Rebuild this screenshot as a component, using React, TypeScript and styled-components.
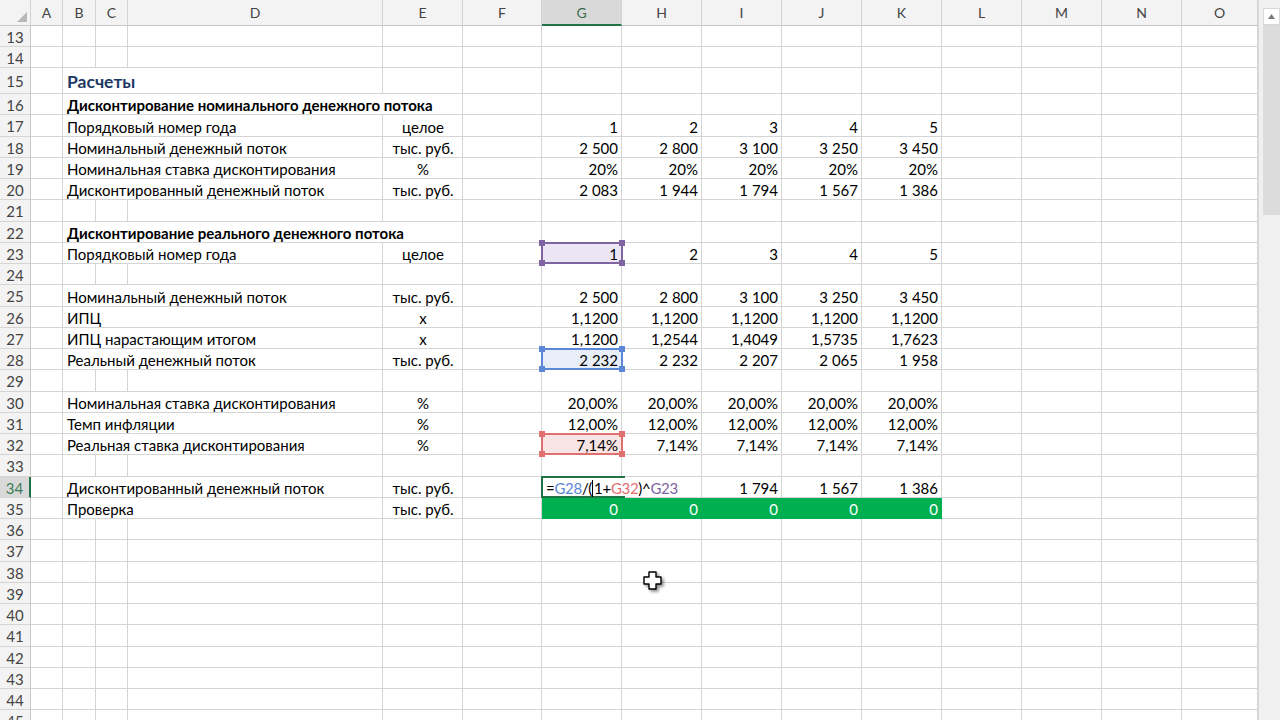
import React from 'react';
import styled, { createGlobalStyle, css } from 'styled-components';

const GRID = '#d4d4d4';
const HEAD_BG = '#f3f3f3';
const EXCEL_GREEN = '#217346';
const CHECK_GREEN = '#00b050';

const COLUMNS = ['A', 'B', 'C', 'D', 'E', 'F', 'G', 'H', 'I', 'J', 'K', 'L', 'M', 'N', 'O'];
const WIDTHS = [32, 33, 32, 255, 80, 79, 80, 80, 80, 80, 80, 80, 80, 80, 76];
const ROW_HEAD_W = 31;
const FIRST_ROW = 13;
const LAST_ROW = 45;

type Tone = 'purple' | 'blue' | 'red';

interface RowSpec {
  label: string;
  kind?: 'title' | 'section' | 'text';
  unit?: string;
  values?: string[];
  mark?: Tone;
  editing?: boolean;
  check?: boolean;
}

const five = (v: string) => [v, v, v, v, v];

const ROWS: Record<number, RowSpec> = {
  15: { label: 'Расчеты', kind: 'title' },
  16: { label: 'Дисконтирование номинального денежного потока', kind: 'section' },
  17: { label: 'Порядковый номер года', unit: 'целое', values: ['1', '2', '3', '4', '5'] },
  18: { label: 'Номинальный денежный поток', unit: 'тыс. руб.', values: ['2 500', '2 800', '3 100', '3 250', '3 450'] },
  19: { label: 'Номинальная ставка дисконтирования', unit: '%', values: five('20%') },
  20: { label: 'Дисконтированный денежный поток', unit: 'тыс. руб.', values: ['2 083', '1 944', '1 794', '1 567', '1 386'] },
  22: { label: 'Дисконтирование реального денежного потока', kind: 'section' },
  23: { label: 'Порядковый номер года', unit: 'целое', values: ['1', '2', '3', '4', '5'], mark: 'purple' },
  25: { label: 'Номинальный денежный поток', unit: 'тыс. руб.', values: ['2 500', '2 800', '3 100', '3 250', '3 450'] },
  26: { label: 'ИПЦ', unit: 'x', values: five('1,1200') },
  27: { label: 'ИПЦ нарастающим итогом', unit: 'x', values: ['1,1200', '1,2544', '1,4049', '1,5735', '1,7623'] },
  28: { label: 'Реальный денежный поток', unit: 'тыс. руб.', values: ['2 232', '2 232', '2 207', '2 065', '1 958'], mark: 'blue' },
  30: { label: 'Номинальная ставка дисконтирования', unit: '%', values: five('20,00%') },
  31: { label: 'Темп инфляции', unit: '%', values: five('12,00%') },
  32: { label: 'Реальная ставка дисконтирования', unit: '%', values: five('7,14%'), mark: 'red' },
  34: { label: 'Дисконтированный денежный поток', unit: 'тыс. руб.', values: ['', '', '1 794', '1 567', '1 386'], editing: true },
  35: { label: 'Проверка', unit: 'тыс. руб.', values: five('0'), check: true },
};

const TONES: Record<Tone, { line: string; fill: string }> = {
  purple: { line: '#8064a2', fill: '#ece6f4' },
  blue: { line: '#5b87d6', fill: '#e7edf9' },
  red: { line: '#e07070', fill: '#f9e4e4' },
};

// rows 16+ are 21.25px on average, rounded so that lines land on whole pixels
const rowHeight = (n: number) => {
  if (n < 15) return 21;
  if (n === 15) return 26;
  const top = Math.round(94 + (n - 16) * 21.25);
  const next = Math.round(94 + (n - 15) * 21.25);
  return next - top;
};

const nbsp = (s: string) => s.replace(/ /g, '\u00a0');

const GlobalStyle = createGlobalStyle`
  html, body {
    margin: 0;
    padding: 0;
    background: #fff;
    overflow: hidden;
  }
  body {
    font-family: Lato, 'Liberation Sans', sans-serif;
    color: #000;
  }
`;

const Page = styled.div`
  display: flex;
  width: 1280px;
  height: 720px;
  overflow: hidden;
`;

const Sheet = styled.div`
  width: 1258px;
  display: flex;
  flex-direction: column;
`;

const HeaderRow = styled.div`
  display: flex;
  flex: none;
  height: 26px;
  background: ${HEAD_BG};
`;

const Corner = styled.div`
  width: ${ROW_HEAD_W}px;
  box-sizing: border-box;
  border-right: 1px solid ${GRID};
  border-bottom: 1px solid #c6c6c6;
  display: flex;
  align-items: flex-end;
  justify-content: flex-end;
  padding: 0 3px 3px 0;
`;

const ColHead = styled.div<{ $w: number; $active?: boolean }>`
  width: ${p => p.$w}px;
  flex: none;
  box-sizing: border-box;
  border-right: 1px solid ${GRID};
  border-bottom: 1px solid #c6c6c6;
  display: flex;
  align-items: center;
  justify-content: center;
  font-size: 14px;
  color: #444;
  ${p =>
    p.$active &&
    css`
      background: #d9d9d9;
      border-bottom: 2px solid ${EXCEL_GREEN};
      color: #3d6b51;
    `}
`;

const Row = styled.div<{ $h: number }>`
  display: flex;
  height: ${p => p.$h}px;
  flex: none;
`;

const RowHead = styled.div<{ $active?: boolean }>`
  width: ${ROW_HEAD_W}px;
  flex: none;
  box-sizing: border-box;
  background: ${HEAD_BG};
  border-right: 1px solid #c6c6c6;
  border-bottom: 1px solid ${GRID};
  display: flex;
  align-items: center;
  justify-content: center;
  padding-top: 1px;
  font-size: 15px;
  color: #444;
  ${p =>
    p.$active &&
    css`
      background: #d9d9d9;
      border-right: 2px solid ${EXCEL_GREEN};
      color: #3d7d58;
    `}
`;

const Cell = styled.div<{
  $w: number;
  $align?: 'left' | 'center' | 'right';
  $fill?: string;
}>`
  width: ${p => p.$w}px;
  flex: none;
  position: relative;
  box-sizing: border-box;
  border-right: 1px solid ${p => p.$fill || GRID};
  border-bottom: 1px solid ${p => p.$fill || GRID};
  background: ${p => p.$fill || 'transparent'};
  display: flex;
  align-items: flex-end;
  justify-content: ${p =>
    p.$align === 'right' ? 'flex-end' : p.$align === 'center' ? 'center' : 'flex-start'};
  padding: 0 3px 0 4px;
  font-size: 15px;
  line-height: 18px;
  white-space: nowrap;
  color: ${p => (p.$fill ? '#fff' : '#000')};
`;

const Label = styled.span<{ $kind: 'title' | 'section' | 'text' }>`
  ${p =>
    p.$kind === 'title' &&
    css`
      font-size: 17.5px;
      font-weight: 700;
      color: #203864;
      line-height: 22px;
    `}
  ${p =>
    p.$kind === 'section' &&
    css`
      font-weight: 700;
    `}
`;

const Value = styled.span`
  position: relative;
  z-index: 2;
`;

const RangeBox = styled.div<{ $tone: Tone }>`
  position: absolute;
  left: -1px;
  top: -1px;
  right: -2px;
  bottom: -1px;
  border: 2px solid ${p => TONES[p.$tone].line};
  background: ${p => TONES[p.$tone].fill};
  z-index: 1;
`;

const Handle = styled.span<{ $tone: Tone; $x: 'l' | 'r'; $y: 't' | 'b' }>`
  position: absolute;
  width: 6px;
  height: 6px;
  background: ${p => TONES[p.$tone].line};
  ${p => (p.$x === 'l' ? 'left: -4px;' : 'right: -4px;')}
  ${p => (p.$y === 't' ? 'top: -4px;' : 'bottom: -4px;')}
`;

const EditBox = styled.div`
  position: absolute;
  left: -1px;
  top: -1px;
  width: 82px;
  bottom: -1px;
  border: 2px solid ${EXCEL_GREEN};
  border-right: none;
  z-index: 1;
`;

const Formula = styled.span`
  position: relative;
  z-index: 2;
  display: flex;
  align-items: flex-end;
  letter-spacing: -0.3px;
`;

const Ref = styled.span<{ $tone: Tone }>`
  color: ${p => TONES[p.$tone].line};
`;

const Caret = styled.span`
  display: inline-block;
  width: 1px;
  height: 17px;
  background: #000;
  margin: 0 1px 0 0;
`;

const ScrollBar = styled.div`
  width: 22px;
  flex: none;
  box-sizing: border-box;
  background: #f0f0f0;
  border-left: 1px solid #dadada;
  display: flex;
  flex-direction: column;
  align-items: flex-end;
  padding-top: 8px;
`;

const ScrollButton = styled.div`
  width: 17px;
  height: 17px;
  box-sizing: border-box;
  background: #fff;
  border: 1px solid #d8d8d8;
  display: flex;
  align-items: center;
  justify-content: center;
`;

const ScrollThumb = styled.div`
  width: 17px;
  height: 190px;
  background: #dcdcdc;
`;

const Pointer = styled.svg`
  position: absolute;
  left: 642px;
  top: 570px;
  filter: drop-shadow(2px 2px 1.5px rgba(0, 0, 0, 0.45));
`;

const SelectAllMark = () => (
  <svg width="10" height="10" viewBox="0 0 10 10">
    <polygon points="10,0 10,10 0,10" fill="#b7b7b7" />
  </svg>
);

const ValueCells: React.FC<{ spec: RowSpec }> = ({ spec }) => {
  const values = spec.values || five('');
  const fill = spec.check ? CHECK_GREEN : undefined;

  if (spec.editing) {
    return (
      <>
        <Cell $w={WIDTHS[6] + WIDTHS[7]}>
          <EditBox />
          <Formula>
            =<Ref $tone="blue">G28</Ref>/(<Caret />1+<Ref $tone="red">G32</Ref>)^
            <Ref $tone="purple">G23</Ref>
          </Formula>
        </Cell>
        {values.slice(2).map((v, i) => (
          <Cell key={i} $w={WIDTHS[8 + i]} $align="right">
            {nbsp(v)}
          </Cell>
        ))}
      </>
    );
  }

  return (
    <>
      {values.map((v, i) => (
        <Cell key={i} $w={WIDTHS[6 + i]} $align="right" $fill={fill}>
          {i === 0 && spec.mark && (
            <RangeBox $tone={spec.mark}>
              <Handle $tone={spec.mark} $x="l" $y="t" />
              <Handle $tone={spec.mark} $x="r" $y="t" />
              <Handle $tone={spec.mark} $x="l" $y="b" />
              <Handle $tone={spec.mark} $x="r" $y="b" />
            </RangeBox>
          )}
          <Value>{nbsp(v)}</Value>
        </Cell>
      ))}
    </>
  );
};

const SheetRow: React.FC<{ n: number }> = ({ n }) => {
  const spec = ROWS[n];
  const h = rowHeight(n);

  if (!spec) {
    return (
      <Row $h={h}>
        <RowHead>{n}</RowHead>
        {WIDTHS.map((w, i) => (
          <Cell key={i} $w={w} />
        ))}
      </Row>
    );
  }

  const kind = spec.kind || 'text';
  const span = kind === 'section' ? 4 : 3;
  const labelWidth = WIDTHS.slice(1, 1 + span).reduce((a, b) => a + b, 0);
  const hasData = kind === 'text';

  return (
    <Row $h={h}>
      <RowHead $active={spec.editing}>{n}</RowHead>
      <Cell $w={WIDTHS[0]} />
      <Cell $w={labelWidth}>
        <Label $kind={kind}>{spec.label}</Label>
      </Cell>
      {span === 3 && (
        <Cell $w={WIDTHS[4]} $align="center">
          {spec.unit ? nbsp(spec.unit) : ''}
        </Cell>
      )}
      <Cell $w={WIDTHS[5]} />
      {hasData ? (
        <ValueCells spec={spec} />
      ) : (
        WIDTHS.slice(6, 11).map((w, i) => <Cell key={i} $w={w} />)
      )}
      {WIDTHS.slice(11).map((w, i) => (
        <Cell key={`r${i}`} $w={w} />
      ))}
    </Row>
  );
};

export default function App() {
  const rows: number[] = [];
  for (let n = FIRST_ROW; n <= LAST_ROW; n++) rows.push(n);

  return (
    <>
      <GlobalStyle />
      <Page>
        <Sheet>
          <HeaderRow>
            <Corner>
              <SelectAllMark />
            </Corner>
            {COLUMNS.map((c, i) => (
              <ColHead key={c} $w={WIDTHS[i]} $active={c === 'G'}>
                {c}
              </ColHead>
            ))}
          </HeaderRow>
          {rows.map(n => (
            <SheetRow key={n} n={n} />
          ))}
        </Sheet>
        <ScrollBar>
          <ScrollButton>
            <svg width="7" height="5" viewBox="0 0 7 5">
              <polygon points="3.5,0 7,5 0,5" fill="#7a7a7a" />
            </svg>
          </ScrollButton>
          <ScrollThumb />
        </ScrollBar>
      </Page>
      <Pointer width="22" height="22" viewBox="0 0 22 22">
        <polygon
          points="7,2 14,2 14,7 19,7 19,14 14,14 14,19 7,19 7,14 2,14 2,7 7,7"
          fill="#fff"
          stroke="#000"
          strokeWidth="1.4"
          strokeLinejoin="round"
        />
      </Pointer>
    </>
  );
}
